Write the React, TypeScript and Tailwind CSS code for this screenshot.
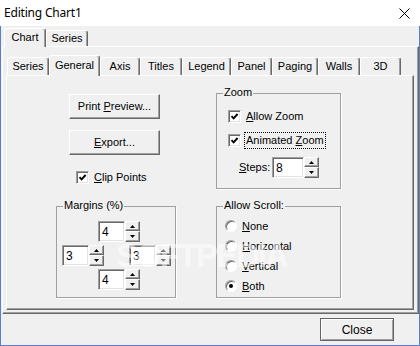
import type { ReactNode } from "react";

const raised =
  "border border-t-white border-l-white border-r-[#696969] border-b-[#696969] shadow-[inset_-1px_-1px_0_#a0a0a0] bg-[#f0f0f0]";
const sunken =
  "border border-t-[#a0a0a0] border-l-[#a0a0a0] border-r-white border-b-white shadow-[inset_1px_1px_0_#696969,inset_-1px_-1px_0_#e3e3e3] bg-white";

function Tab({ label, className, active }: { label: string; className: string; active?: boolean }) {
  return (
    <div
      className={`flex items-center justify-center rounded-t-[3px] border-t border-l border-r border-t-white border-l-white border-r-[#696969] bg-[#f0f0f0] shadow-[inset_-1px_0_0_#a0a0a0] ${
        active ? "relative z-10 -mb-px pb-[2px]" : ""
      } ${className}`}
    >
      {label}
    </div>
  );
}

function Arrow({ down }: { down?: boolean }) {
  return (
    <svg width="5" height="3" viewBox="0 0 5 3">
      <path d={down ? "M0 0h5L2.5 3z" : "M0 3h5L2.5 0z"} fill="#000" />
    </svg>
  );
}

function Spin({ value, edit = "w-[27px]" }: { value: string; edit?: string }) {
  return (
    <div className="flex h-[21px]">
      <div className={`flex items-center pl-[3px] text-[12px] ${edit} ${sunken}`}>{value}</div>
      <div className="flex w-[15px] flex-col">
        <div className={`flex h-[10px] items-center justify-center ${raised}`}>
          <Arrow />
        </div>
        <div className={`flex h-[11px] items-center justify-center ${raised}`}>
          <Arrow down />
        </div>
      </div>
    </div>
  );
}

function Check({ children }: { children: ReactNode }) {
  return (
    <div className="flex h-[13px] items-center gap-[5px]">
      <div className={`flex h-[13px] w-[13px] items-center justify-center ${sunken}`}>
        <svg width="9" height="9" viewBox="0 0 9 9">
          <path d="M1.5 4.2 3.6 6.4 7.6 2" fill="none" stroke="#000" strokeWidth="1.9" />
        </svg>
      </div>
      {children}
    </div>
  );
}

function Radio({ checked, children }: { checked?: boolean; children: ReactNode }) {
  return (
    <div className="flex h-[12px] items-center gap-[5px]">
      <div className="flex h-[12px] w-[12px] items-center justify-center rounded-full border border-t-[#a0a0a0] border-l-[#a0a0a0] border-r-white border-b-white bg-white shadow-[inset_1px_1px_0_#696969]">
        {checked && <div className="h-[4px] w-[4px] rounded-full bg-black" />}
      </div>
      {children}
    </div>
  );
}

function Group({ title, className, children }: { title: string; className: string; children: ReactNode }) {
  return (
    <div className={`relative border border-[#a0a0a0] shadow-[1px_1px_0_white] ${className}`}>
      <span className="absolute -top-[8px] left-[6px] bg-[#f0f0f0] px-px leading-[13px]">{title}</span>
      {children}
    </div>
  );
}

export default function App() {
  return (
    <div className="relative flex h-[346px] w-[420px] flex-col bg-[#f0f0f0] font-['Liberation_Sans',Arial,sans-serif] text-[11px] text-black">
      <div className="flex h-[26px] items-center justify-between bg-white pl-[4px] pr-[10px]">
        <span className="font-['Noto_Sans',sans-serif] text-[12px] tracking-[-0.2px]">Editing Chart1</span>
        <svg width="11" height="11" viewBox="0 0 11 11">
          <path d="M0.5 0.5l10 10M10.5 0.5l-10 10" stroke="#000" strokeWidth="1" />
        </svg>
      </div>

      <div className="flex flex-1 flex-col border-x border-b border-[#5a7fcf]">
        <div className="flex h-[20px] items-end pl-[3px]">
          <Tab label="Chart" active className="h-[19px] w-[42px]" />
          <Tab label="Series" className="h-[16px] w-[42px]" />
        </div>

        <div className="ml-px flex h-[268px] w-[417px] flex-col border-t border-l border-r border-b border-t-white border-l-white border-r-[#696969] border-b-[#696969] shadow-[inset_-1px_-1px_0_#a0a0a0]">
          <div className="flex h-[28px] items-end pl-[4px]">
            <Tab label="Series" className="h-[18px] w-[42px]" />
            <Tab label="General" active className="h-[21px] w-[51px]" />
            <Tab label="Axis" className="h-[18px] w-[40px]" />
            <Tab label="Titles" className="h-[18px] w-[42px]" />
            <Tab label="Legend" className="h-[18px] w-[49px]" />
            <Tab label="Panel" className="h-[18px] w-[41px]" />
            <Tab label="Paging" className="h-[18px] w-[46px]" />
            <Tab label="Walls" className="h-[18px] w-[42px]" />
            <Tab label="3D" className="h-[18px] w-[41px]" />
          </div>

          <div className="ml-[3px] grid h-[235px] w-[408px] grid-cols-[120px_125px] content-start gap-x-[40px] gap-y-[17px] border-t border-l border-r border-b border-t-white border-l-white border-r-[#696969] border-b-[#696969] pl-[49px] pt-[17px] shadow-[inset_-1px_-1px_0_#a0a0a0]">
            <div className="flex flex-col">
              <div className={`ml-[13px] mt-px flex h-[25px] w-[91px] items-center justify-center ${raised}`}>
                Print&nbsp;<u>P</u>review...
              </div>
              <div className={`ml-[13px] mt-[11px] flex h-[25px] w-[91px] items-center justify-center ${raised}`}>
                <span>
                  <u>E</u>xport...
                </span>
              </div>
              <div className="ml-[20px] mt-[16px]">
                <Check>
                  <span>
                    <u>C</u>lip Points
                  </span>
                </Check>
              </div>
            </div>

            <Group title="Zoom" className="h-[96px] pl-[11px] pt-[16px]">
              <Check>
                <span>
                  <u>A</u>llow Zoom
                </span>
              </Check>
              <div className="mt-[11px]">
                <Check>
                  <span className="leading-[13px] outline-1 outline-offset-[1px] outline-dotted outline-black">
                    Animated <u>Z</u>oom
                  </span>
                </Check>
              </div>
              <div className="mt-[10px] flex items-center gap-[2px] pl-[11px]">
                <span className="w-[31px]">
                  <u>S</u>teps:
                </span>
                <Spin value="8" edit="w-[32px]" />
              </div>
            </Group>

            <Group title="Margins (%)" className="h-[92px] pt-[14px]">
              <div className="pl-[41px]">
                <Spin value="4" />
              </div>
              <div className="mt-[3px] flex justify-between pl-[5px] pr-[4px]">
                <Spin value="3" />
                <Spin value="3" />
              </div>
              <div className="mt-[3px] pl-[41px]">
                <Spin value="4" />
              </div>
            </Group>

            <Group title="Allow Scroll:" className="flex h-[92px] flex-col gap-[8px] pl-[8px] pt-[13px]">
              <Radio>
                <span>
                  <u>N</u>one
                </span>
              </Radio>
              <Radio>
                <span>
                  <u>H</u>orizontal
                </span>
              </Radio>
              <Radio>
                <span>
                  <u>V</u>ertical
                </span>
              </Radio>
              <Radio checked>
                <span>
                  <u>B</u>oth
                </span>
              </Radio>
            </Group>
          </div>
        </div>

        <div className="flex justify-end pr-[25px] pt-[4px]">
          <div className="flex h-[23px] w-[74px] items-center justify-center border border-[#646464] bg-[#f0f0f0] text-[12px] shadow-[inset_1px_1px_0_white,inset_-1px_-1px_0_#a0a0a0]">
            Close
          </div>
        </div>
      </div>

      <div className="pointer-events-none absolute left-[116px] top-[239px] font-['Liberation_Sans',Arial,sans-serif] text-[33px] font-bold leading-none tracking-[-2px] text-white/50">
        SOFTPEDIA
      </div>
    </div>
  );
}
